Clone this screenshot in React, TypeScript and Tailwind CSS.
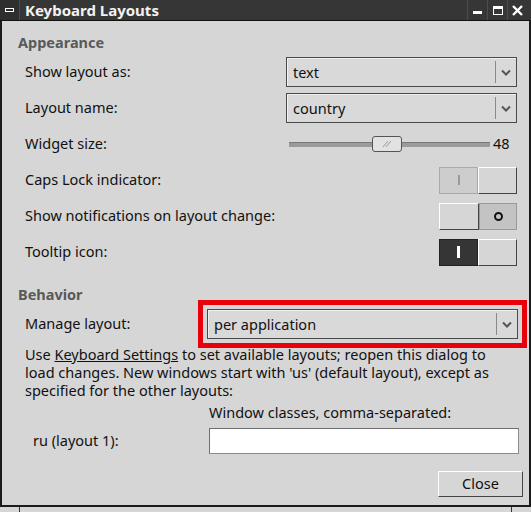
import React from "react";

const font = { fontFamily: '"Noto Sans", "Open Sans", "DejaVu Sans", sans-serif' };

function Chevron() {
  return (
    <svg width="10" height="7" viewBox="0 0 10 7">
      <path d="M1 1.5 L5 5.5 L9 1.5" fill="none" stroke="#555" strokeWidth="2" />
    </svg>
  );
}

function Combo({ value, width }: { value: string; width: string }) {
  return (
    <div
      className={`${width} shrink-0 h-[30px] flex items-center border border-[#4a4a4a] bg-[#d9d9d9] shadow-[inset_1px_1px_0_#f0f0f0]`}
    >
      <span className="flex-1 pl-[6px] text-[14.5px] text-[#111] leading-none">{value}</span>
      <div className="w-px h-[22px] bg-[#8a8a8a]" />
      <div className="w-[20px] flex items-center justify-center">
        <Chevron />
      </div>
    </div>
  );
}

function Row({ label, children }: { label: string; children?: React.ReactNode }) {
  return (
    <div className="h-[36px] flex items-center justify-between">
      <span className="pl-[22px] text-[14.5px] text-[#111]">{label}</span>
      {children}
    </div>
  );
}

const raised =
  "bg-[#d6d6d6] border-t border-l border-t-white border-l-white border-b border-r border-b-[#444] border-r-[#444]";

function Toggle({ kind }: { kind: "caps" | "notify" | "tooltip" }) {
  if (kind === "caps") {
    return (
      <div className="w-[78px] h-[27px] flex shrink-0">
        <div className="w-[39px] h-full bg-[#cdcdcd] border border-[#aaa] flex items-center justify-center">
          <div className="w-[2px] h-[10px] bg-[#999]" />
        </div>
        <div className={`flex-1 h-full ${raised}`} />
      </div>
    );
  }
  if (kind === "notify") {
    return (
      <div className="w-[78px] h-[27px] flex shrink-0">
        <div className={`w-[40px] h-full ${raised}`} />
        <div className="flex-1 h-full bg-[#c3c3c3] border border-[#999] flex items-center justify-center">
          <div className="w-[9px] h-[9px] rounded-full border-2 border-[#111]" />
        </div>
      </div>
    );
  }
  return (
    <div className="w-[78px] h-[27px] flex shrink-0">
      <div className="w-[39px] h-full bg-[#353535] border border-[#222] flex items-center justify-center">
        <div className="w-[3px] h-[12px] bg-white" />
      </div>
      <div className={`flex-1 h-full ${raised}`} />
    </div>
  );
}

function Slider() {
  return (
    <div className="flex items-center shrink-0">
      <div className="relative w-[201px] h-[16px] flex items-center">
        <div className="w-full h-[5px] bg-[#9a9a9a] border-t border-[#7a7a7a]" />
        <div className="absolute left-[83px] top-0 w-[30px] h-[16px] rounded-[3px] border border-[#555] bg-[#e2e2e2] flex items-center justify-center">
          <svg width="12" height="8" viewBox="0 0 12 8">
            <path d="M2 7 L7 1 M5 7 L10 1" stroke="#9a9a9a" strokeWidth="1" />
          </svg>
        </div>
      </div>
      <span className="w-[27px] pl-[3px] text-[14.5px] text-[#111]">48</span>
    </div>
  );
}

export default function App() {
  return (
    <div className="w-[531px] h-[512px] flex flex-col bg-[#d6d6d6]" style={font}>
      {/* title bar */}
      <div className="h-[21px] flex bg-[#363636] border-b border-[#111]">
        <div className="w-[20px] h-full bg-[#2f2f2f] flex items-center justify-center border-r border-[#4a4a4a]">
          <div className="w-[9px] h-[4px] border border-white" />
        </div>
        <div className="flex-1 pl-[5px] text-[15px] font-bold text-[#f2f2f2] leading-[20px]">
          Keyboard Layouts
        </div>
        <div className="flex h-full pr-[4px]">
          <div className="w-[20px] h-full border-l border-[#4c4c4c] flex items-end justify-center pb-[6px]">
            <div className="w-[9px] h-[3px] bg-white" />
          </div>
          <div className="w-[20px] h-full border-l border-[#4c4c4c] flex items-center justify-center">
            <div className="w-[10px] h-[9px] border border-white border-t-[3px]" />
          </div>
          <div className="w-[20px] h-full border-l border-[#4c4c4c] flex items-center justify-center">
            <svg width="11" height="11" viewBox="0 0 11 11">
              <path d="M1 1 L10 10 M10 1 L1 10" stroke="white" strokeWidth="2.4" />
            </svg>
          </div>
        </div>
      </div>

      {/* dialog body */}
      <div className="flex-1 flex flex-col border-l-2 border-r-2 border-[#1b1b1b] pt-[11px] pr-[12px] pl-[1px]">
        <div className="h-[20px] pl-[15px] text-[14.5px] font-bold text-[#595959] leading-[20px]">Appearance</div>
        <div className="mt-[2px] flex flex-col">
          <Row label="Show layout as:">
            <Combo value="text" width="w-[231px]" />
          </Row>
          <Row label="Layout name:">
            <Combo value="country" width="w-[231px]" />
          </Row>
          <Row label="Widget size:">
            <Slider />
          </Row>
          <Row label="Caps Lock indicator:">
            <Toggle kind="caps" />
          </Row>
          <Row label="Show notifications on layout change:">
            <Toggle kind="notify" />
          </Row>
          <Row label="Tooltip icon:">
            <Toggle kind="tooltip" />
          </Row>
        </div>

        <div className="mt-[14px] h-[20px] pl-[15px] text-[14.5px] font-bold text-[#595959] leading-[20px]">Behavior</div>
        <div className="mt-[2px] h-[36px] flex items-center justify-between">
          <span className="pl-[22px] text-[14.5px] text-[#111]">Manage layout:</span>
          <div className="relative mr-[-1px]">
            <Combo value="per application" width="w-[311px]" />
            <div className="absolute -left-[9px] -right-[9px] -top-[9px] -bottom-[9px] border-[5px] border-[#e8000b] pointer-events-none" />
          </div>
        </div>
        <p className="mt-[3px] pl-[22px] pr-[6px] text-[14.5px] leading-[18px] text-[#111]">
          Use <span className="underline">Keyboard Settings</span> to set available layouts; reopen this dialog to
          load changes. New windows start with 'us' (default layout), except as specified for the other layouts:
        </p>
        <div className="mt-[4px] h-[18px] pl-[206px] text-[14.5px] leading-[18px] text-[#111]">
          Window classes, comma-separated:
        </div>
        <div className="mt-[2px] h-[36px] flex items-center">
          <span className="w-[206px] shrink-0 pl-[30px] text-[14.5px] text-[#111]">ru (layout 1):</span>
          <div className="w-[310px] shrink-0 h-[26px] bg-white border border-[#8c8c8c] border-t-[#6e6e6e] border-l-[#6e6e6e]" />
        </div>
        <div className="mt-[12px] flex justify-end mr-[-6px]">
          <div className={`w-[85px] h-[26px] ${raised} flex items-center justify-center text-[14.5px] text-[#111]`}>
            Close
          </div>
        </div>
      </div>

      {/* bottom frame */}
      <div className="h-[7px] flex border-t-2 border-[#1b1b1b] bg-[#d6d6d6]">
        <div className="w-[20px] h-full border-r border-[#333]" />
        <div className="flex-1" />
        <div className="w-[20px] h-full border-l border-[#333]" />
      </div>
    </div>
  );
}
